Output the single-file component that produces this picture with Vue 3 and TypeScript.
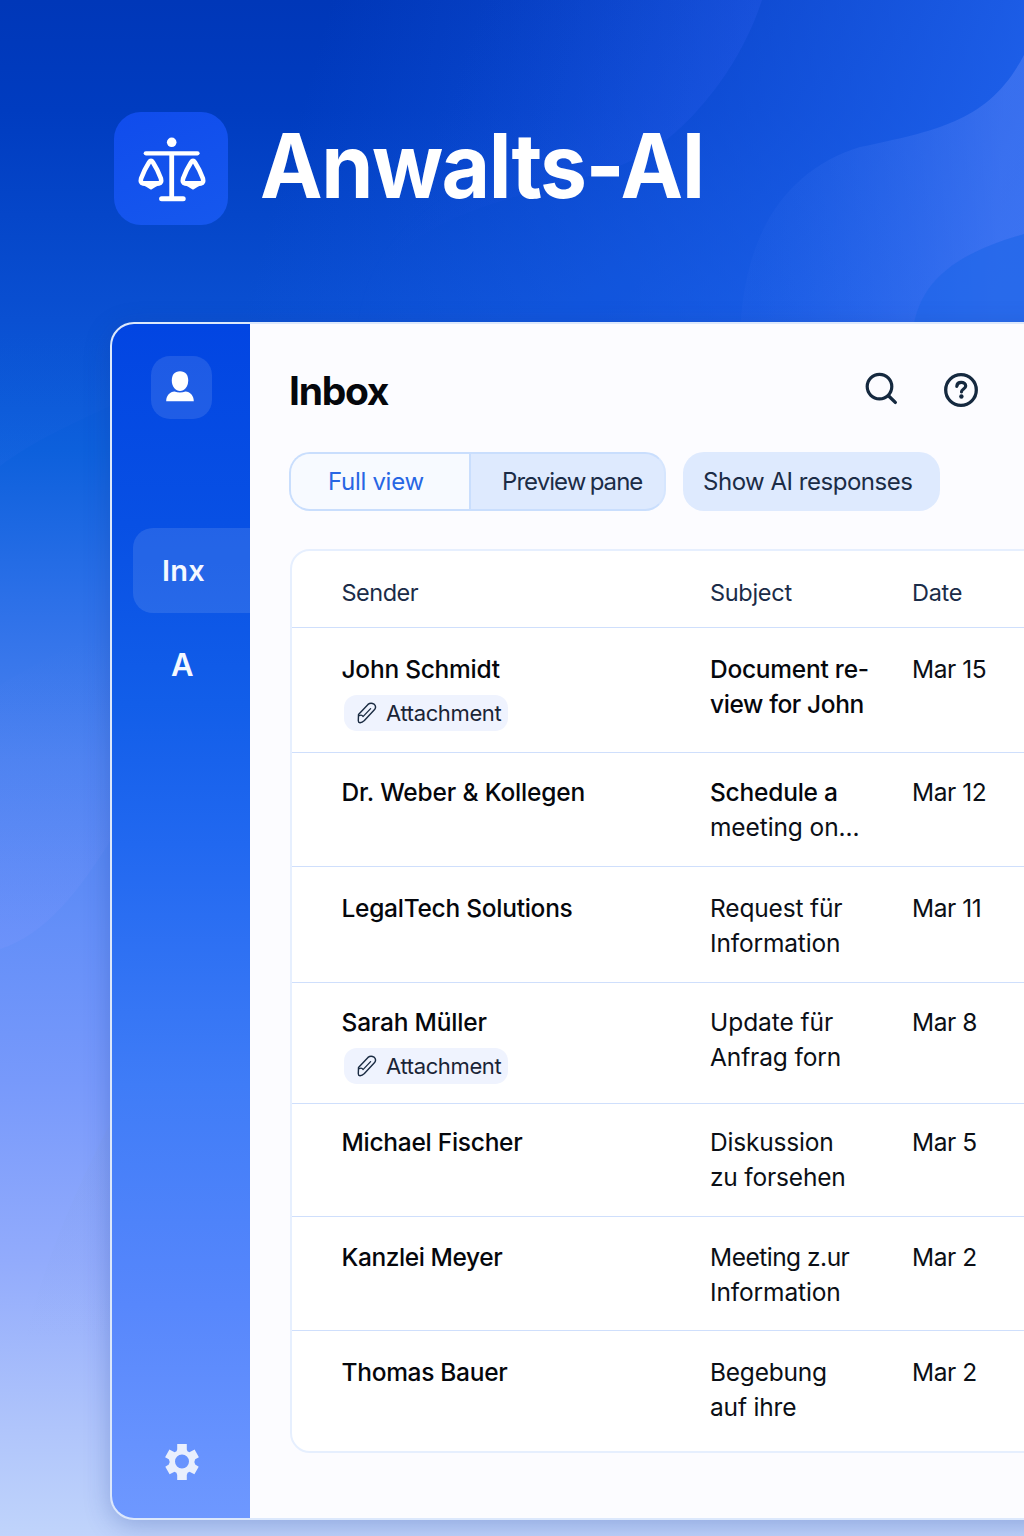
<script setup lang="ts">
interface SubjectLine {
  text: string
  strong?: boolean
  spacing?: number
}

interface Mail {
  sender: string
  spacing: number
  subject: SubjectLine[]
  date: string
  attachment?: boolean
  height: number
  offset: number
}

const mails: Mail[] = [
  { sender: 'John Schmidt', spacing: -0.25, subject: [{ text: 'Document re-', strong: true, spacing: -0.25 }, { text: 'view for John', strong: true, spacing: -0.38 }], date: 'Mar 15', attachment: true, height: 125, offset: 24 },
  { sender: 'Dr. Weber & Kollegen', spacing: -0.16, subject: [{ text: 'Schedule a', strong: true, spacing: -0.22 }, { text: 'meeting on...', spacing: -0.1 }], date: 'Mar 12', height: 114, offset: 22 },
  { sender: 'LegalTech Solutions', spacing: -0.27, subject: [{ text: 'Request für', spacing: -0.15 }, { text: 'Information', spacing: -0.15 }], date: 'Mar 11', height: 116, offset: 24 },
  { sender: 'Sarah Müller', spacing: -0.2, subject: [{ text: 'Update für', spacing: -0.05 }, { text: 'Anfrag forn', spacing: -0.12 }], date: 'Mar 8', attachment: true, height: 121, offset: 22 },
  { sender: 'Michael Fischer', spacing: -0.27, subject: [{ text: 'Diskussion', spacing: -0.18 }, { text: 'zu forsehen', spacing: -0.18 }], date: 'Mar 5', height: 113, offset: 21 },
  { sender: 'Kanzlei Meyer', spacing: -0.42, subject: [{ text: 'Meeting z.ur', spacing: -0.5 }, { text: 'Information', spacing: -0.12 }], date: 'Mar 2', height: 114, offset: 23 },
  { sender: 'Thomas Bauer', spacing: -0.3, subject: [{ text: 'Begebung', spacing: -0.22 }, { text: 'auf ihre', spacing: -0.18 }], date: 'Mar 2', height: 122, offset: 24 },
]
</script>

<template>
  <div class="page">
    <svg class="waves" viewBox="0 0 1024 1536" preserveAspectRatio="none" aria-hidden="true">
      <defs>
        <linearGradient id="w0" gradientUnits="userSpaceOnUse" x1="330" y1="0" x2="1024" y2="200">
          <stop offset="0" stop-color="#1c5cee" stop-opacity="0" />
          <stop offset="1" stop-color="#2467f2" stop-opacity=".85" />
        </linearGradient>
        <linearGradient id="w1" gradientUnits="userSpaceOnUse" x1="740" y1="100" x2="480" y2="0">
          <stop offset="0" stop-color="#2f5ff0" stop-opacity=".28" />
          <stop offset="1" stop-color="#1a50e0" stop-opacity="0" />
        </linearGradient>
        <linearGradient id="w3" gradientUnits="userSpaceOnUse" x1="1000" y1="210" x2="760" y2="200">
          <stop offset="0" stop-color="#5a84f6" stop-opacity=".46" />
          <stop offset="1" stop-color="#3a70ee" stop-opacity=".1" />
        </linearGradient>
        <linearGradient id="w4" gradientUnits="userSpaceOnUse" x1="0" y1="330" x2="0" y2="470">
          <stop offset="0" stop-color="#0e58d6" stop-opacity="0" />
          <stop offset="1" stop-color="#2068e4" stop-opacity=".3" />
        </linearGradient>
        <linearGradient id="w5" gradientUnits="userSpaceOnUse" x1="0" y1="640" x2="0" y2="950">
          <stop offset="0" stop-color="#5a86f4" stop-opacity="0" />
          <stop offset="1" stop-color="#8098ff" stop-opacity=".25" />
        </linearGradient>
        <linearGradient id="w6" gradientUnits="userSpaceOnUse" x1="0" y1="1120" x2="0" y2="1340">
          <stop offset="0" stop-color="#7f9ce8" stop-opacity=".22" />
          <stop offset="1" stop-color="#8da9ee" stop-opacity="0" />
        </linearGradient>
      </defs>
      <path d="M0 0H1024V340H0Z" fill="url(#w0)" />
      <path d="M762 0C742 62 700 115 660 145C590 195 430 190 380 280L300 0Z" fill="url(#w1)" />
      <path d="M1024 55C990 120 940 130 860 147C785 170 742 235 740 340H1024Z" fill="url(#w3)" />
      <path d="M1024 234C950 255 915 285 912 340H1024Z" fill="#1f66e8" fill-opacity=".65" />
      <path d="M356 340C360 280 385 235 440 200H640V340Z" fill="#0f5ae0" fill-opacity=".06" />
      <path d="M0 330H112V405C70 425 35 440 0 466Z" fill="url(#w4)" />
      <path d="M0 685C50 655 90 635 112 632V838C80 890 45 935 0 949Z" fill="url(#w5)" />
      <path d="M112 1120C75 1190 45 1260 25 1340H112Z" fill="url(#w6)" />
    </svg>

    <header class="brand">
      <div class="logo">
        <svg width="68" height="66" viewBox="0 0 68 66" fill="none" stroke="#fff" stroke-linecap="round" stroke-linejoin="round">
          <circle cx="33.7" cy="5.3" r="4.8" fill="#fff" stroke="none" />
          <path d="M7.8 16.3H59.5" stroke-width="4.2" />
          <path d="M33.7 17V61" stroke-width="4.8" stroke-linecap="butt" />
          <path d="M23.6 61.8H45.2" stroke-width="5" />
          <path d="M11.1 25.2Q13 22.4 14.9 25.2Q19.9 33 22.9 41.5Q24 46 21 46.4H5Q2 46 3.1 41.5Q6.1 33 11.1 25.2Z" stroke-width="4.6" />
          <path d="M4.5 47H21.5L17 49.3L13 51.8L9 49.3Z" fill="#fff" stroke-width="1.6" />
          <path d="M53.1 25.2Q55 22.4 56.9 25.2Q61.9 33 64.9 41.5Q66 46 63 46.4H47Q44 46 45.1 41.5Q48.1 33 53.1 25.2Z" stroke-width="4.6" />
          <path d="M46.5 47H63.5L59 49.3L55 51.8L51 49.3Z" fill="#fff" stroke-width="1.6" />
        </svg>
      </div>
      <h1>Anwalts-AI</h1>
    </header>

    <div class="window">
      <aside class="sidebar">
        <div class="avatar">
          <svg width="28" height="31" viewBox="0 0 28 31" fill="#fff">
            <path d="M14 .3C19.5 .3 22.2 4 22.2 9.5C22.2 15.5 18.5 20 14 20S5.8 15.5 5.8 9.5C5.8 4 8.5 .3 14 .3Z" />
            <path d="M.2 30.2C.2 24.5 4 21 8.5 20.6Q14 22.6 19.5 20.6C24 21 27.8 24.5 27.8 30.2Z" />
          </svg>
        </div>
        <nav>
          <a class="nav-item active">Inx</a>
          <a class="nav-item">A</a>
        </nav>
        <svg class="gear" width="34" height="36" viewBox="0 0 34 36">
          <path fill-rule="evenodd" fill="#e9effd" d="M12.2 0H21.8V5.5Q21.9 7.6 24.4 8.3L29.6 5.5L33.9 13.2L30.2 15.3Q28.6 17.9 30.2 20.4L33.7 22.7L29.4 30.3L24.5 27.8Q22.1 28.2 21.8 31V36H12.2V31Q12 28.3 9.5 27.8L4.6 30.3L.3 22.7L3.8 20.4Q5.5 17.9 3.8 15.3L.1 13.2L4.4 5.5L9.6 8.3Q12.1 7.6 12.2 5.5ZM17 10.5A7 7 0 1 0 17 24.5A7 7 0 1 0 17 10.5Z" />
        </svg>
      </aside>

      <main class="content">
        <div class="title-row">
          <h2>Inbox</h2>
          <svg class="search" width="34" height="34" viewBox="0 0 34 34" fill="none" stroke="#15293f" stroke-width="3.2" stroke-linecap="round">
            <circle cx="14.5" cy="14.6" r="12.3" />
            <path d="M23.7 24L30.3 30.4" stroke-width="3.4" />
          </svg>
          <svg class="help" width="36" height="36" viewBox="0 0 36 36" fill="none" stroke="#15293f" stroke-linecap="round">
            <circle cx="18" cy="18" r="15.3" stroke-width="3.3" />
            <path d="M13.8 14.4C14 11.7 15.9 10.4 18.2 10.4C20.7 10.4 22.7 11.8 22.7 14C22.7 17 18.6 17 18.5 19.8" stroke-width="3.2" />
            <circle cx="18.4" cy="24.5" r="2.2" fill="#15293f" stroke="none" />
          </svg>
        </div>

        <div class="toolbar">
          <div class="segmented">
            <button class="segment selected">Full view</button>
            <button class="segment preview">Preview pane</button>
          </div>
          <button class="toggle">Show AI responses</button>
        </div>

        <section class="table">
          <div class="row head">
            <div class="head-sender">Sender</div>
            <div>Subject</div>
            <div>Date</div>
          </div>
          <div
            v-for="mail in mails"
            :key="mail.sender"
            class="row"
            :style="{ height: mail.height + 'px', paddingTop: mail.offset + 'px' }"
          >
            <div class="sender">
              <span :style="{ letterSpacing: mail.spacing + 'px' }">{{ mail.sender }}</span>
              <div v-if="mail.attachment" class="chip">
                <svg width="20" height="22" viewBox="0 0 20 22" fill="none" stroke="#1a2b42" stroke-width="1.4" stroke-linecap="round" stroke-linejoin="round">
                  <path d="M1.5 12.4L11 2.4Q13.8 .2 17 2.1Q19.8 4.6 17.6 7.6L7.4 18.5Q5.2 20.6 3 20.8Q1.2 20.7 1.3 18.6Z" />
                  <path d="M2.2 13.6Q5 12.4 6 14.6L13.6 6.6" stroke-width="1.3" />
                </svg>
                <span>Attachment</span>
              </div>
            </div>
            <div>
              <div v-for="line in mail.subject" :key="line.text" :class="{ strong: line.strong }">
                <span :style="{ letterSpacing: (line.spacing ?? 0) + 'px' }">{{ line.text }}</span>
              </div>
            </div>
            <div class="date">{{ mail.date }}</div>
          </div>
        </section>
      </main>
    </div>
  </div>
</template>

<style>
html,
body {
  margin: 0;
  overflow: hidden;
}
</style>

<style scoped>
* {
  box-sizing: border-box;
}

.page {
  position: relative;
  width: 1024px;
  height: 1536px;
  overflow: hidden;
  padding: 112px 0 0 110px;
  font-family: Inter, "Liberation Sans", sans-serif;
  background: linear-gradient(180deg, #0037b8 0, #003cc0 110px, #0a50d2 320px, #0d60dc 450px, #2c70e8 600px, #4c82f0 760px, #648ff8 930px, #7799fb 1080px, #92abfc 1260px, #b0c5fb 1430px, #c0d4fb 1536px);
}

.waves {
  position: absolute;
  inset: 0;
  width: 1024px;
  height: 1536px;
}

.brand {
  position: relative;
  display: flex;
  height: 210px;
  padding-left: 4px;
}

.logo {
  display: flex;
  justify-content: center;
  width: 114px;
  height: 113px;
  padding-top: 25px;
  padding-left: 2px;
  border-radius: 27px;
  background: linear-gradient(160deg, #104cec, #1658ee);
}

h1 {
  margin: 0 0 0 32px;
  font-size: 89px;
  line-height: 108px;
  font-weight: 700;
  letter-spacing: -1.5px;
  color: #fff;
  white-space: nowrap;
  transform: scaleX(0.942);
  transform-origin: 0 50%;
}

.window {
  position: relative;
  display: flex;
  width: 960px;
  height: 1198px;
  border: 2px solid #dce8fc;
  border-radius: 24px;
  overflow: hidden;
  background: #fcfcff;
  box-shadow: 0 6px 26px rgba(28, 62, 150, 0.28);
}

.sidebar {
  display: flex;
  flex-direction: column;
  align-items: center;
  flex: none;
  width: 138px;
  padding-top: 32px;
  background: linear-gradient(180deg, #0245e2 0, #0850e4 200px, #125ee9 380px, #2168f0 520px, #3f7cf7 760px, #5787fc 980px, #6e98ff 1194px);
}

.avatar {
  display: flex;
  justify-content: center;
  width: 61px;
  height: 63px;
  padding-top: 15px;
  padding-right: 2px;
  border-radius: 19px;
  background: rgba(255, 255, 255, 0.11);
}

nav {
  align-self: stretch;
  display: flex;
  flex-direction: column;
  margin-top: 109px;
}

.nav-item {
  height: 102px;
  display: flex;
  align-items: center;
  margin-left: 21px;
  padding-left: 38px;
  font-size: 31px;
  font-weight: 600;
  color: #f4f8ff;
}

.nav-item.active {
  height: 85px;
  padding-left: 29px;
  font-size: 29px;
  letter-spacing: 0.3px;
  border-radius: 20px 0 0 20px;
  background: rgba(255, 255, 255, 0.11);
}

.gear {
  margin-top: auto;
  margin-bottom: 38px;
  margin-left: 1px;
}

.content {
  flex: 1;
  min-width: 0;
  padding-left: 40px;
}

.title-row {
  display: flex;
  height: 128px;
}

h2 {
  margin: 43px 0 0 -1px;
  width: 576px;
  font-size: 39px;
  line-height: 48px;
  font-weight: 700;
  letter-spacing: -1.3px;
  color: #05070c;
}

.search {
  margin-top: 48px;
}

.help {
  margin: 48px 0 0 44px;
}

.toolbar {
  display: flex;
  gap: 18px;
  height: 59px;
  margin-left: -1px;
}

button {
  border: 0;
  margin: 0;
  padding: 0;
  font: inherit;
  font-size: 24px;
  color: #1b2c46;
  text-align: left;
  white-space: nowrap;
  background: transparent;
}

.segmented {
  display: flex;
  width: 377px;
  border: 2px solid #c9defd;
  border-color: #c9defd #d6e6fe #c9defd #c9defd;
  border-radius: 21px;
  overflow: hidden;
  background: #deeafe;
}

.segment.selected {
  width: 180px;
  padding-left: 37px;
  letter-spacing: -0.3px;
  color: #2766e4;
  background: #f7faff;
  border-right: 2px solid #c9defd;
}

.segment.preview {
  padding-left: 31px;
  letter-spacing: -0.95px;
  word-spacing: -1.5px;
}

.toggle {
  width: 257px;
  margin-left: -1px;
  padding-left: 20px;
  border-radius: 21px;
  letter-spacing: -0.48px;
  background: #deeafe;
}

.table {
  width: 800px;
  height: 904px;
  margin-top: 38px;
  margin-left: -0.5px;
  border: 2px solid #e6effe;
  border-radius: 20px;
  background: #fff;
}

.row {
  display: grid;
  grid-template-columns: 368.5px 202px 1fr;
  padding-left: 50px;
  font-size: 24.5px;
  line-height: 35.3px;
  color: #0b0f16;
  border-bottom: 1px solid #cfdffc;
  white-space: nowrap;
}

.row:last-child {
  border-bottom: 0;
}

.head {
  height: 77px;
  padding-top: 24px;
  font-size: 23.5px;
  letter-spacing: -0.3px;
  color: #1b2c48;
}

.head-sender {
  letter-spacing: -0.5px;
}

.sender,
.strong {
  font-weight: 500;
  color: #05070c;
}

.date {
  letter-spacing: -0.45px;
}

.chip {
  display: flex;
  align-items: center;
  width: 164px;
  height: 36px;
  margin: 8px 0 0 2px;
  padding-left: 13px;
  gap: 9.5px;
  border-radius: 13px;
  font-size: 22px;
  font-weight: 400;
  letter-spacing: -0.36px;
  color: #1a2436;
  background: #eff3fe;
}
</style>
